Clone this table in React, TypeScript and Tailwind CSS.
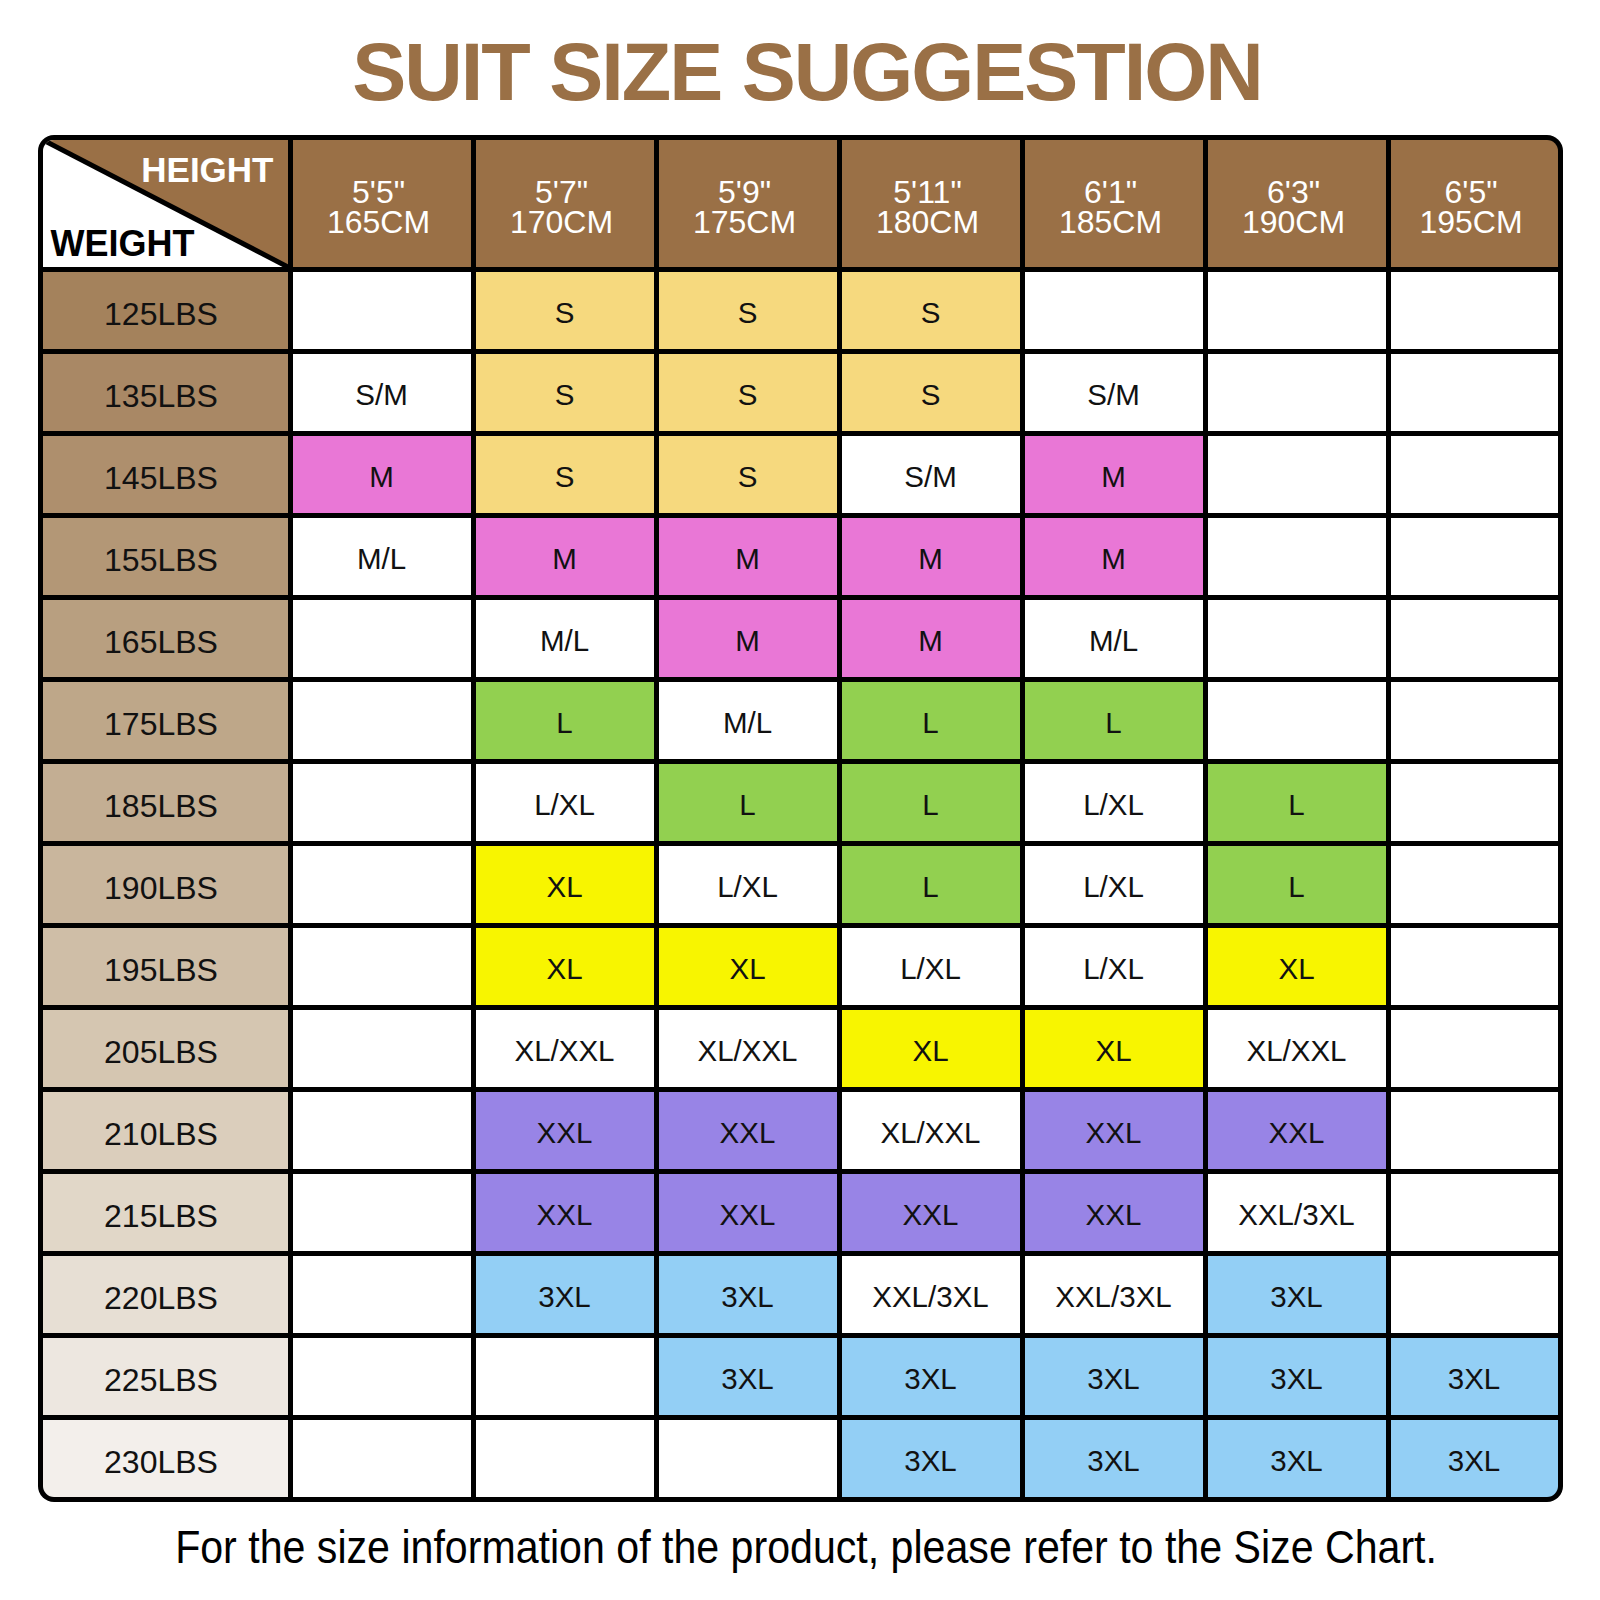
import React from "react";

const heights = [
  ["5'5\"", "165CM"],
  ["5'7\"", "170CM"],
  ["5'9\"", "175CM"],
  ["5'11\"", "180CM"],
  ["6'1\"", "185CM"],
  ["6'3\"", "190CM"],
  ["6'5\"", "195CM"],
];

const rows: { label: string; bg: string; cells: string[] }[] = [
  { label: "125LBS", bg: "bg-[#a4825c]", cells: ["", "S", "S", "S", "", "", ""] },
  { label: "135LBS", bg: "bg-[#a98865]", cells: ["S/M", "S", "S", "S", "S/M", "", ""] },
  { label: "145LBS", bg: "bg-[#ae8f6d]", cells: ["M", "S", "S", "S/M", "M", "", ""] },
  { label: "155LBS", bg: "bg-[#b39776]", cells: ["M/L", "M", "M", "M", "M", "", ""] },
  { label: "165LBS", bg: "bg-[#b89f80]", cells: ["", "M/L", "M", "M", "M/L", "", ""] },
  { label: "175LBS", bg: "bg-[#bea789]", cells: ["", "L", "M/L", "L", "L", "", ""] },
  { label: "185LBS", bg: "bg-[#c3ae93]", cells: ["", "L/XL", "L", "L", "L/XL", "L", ""] },
  { label: "190LBS", bg: "bg-[#c9b69d]", cells: ["", "XL", "L/XL", "L", "L/XL", "L", ""] },
  { label: "195LBS", bg: "bg-[#cfbea7]", cells: ["", "XL", "XL", "L/XL", "L/XL", "XL", ""] },
  { label: "205LBS", bg: "bg-[#d5c6b1]", cells: ["", "XL/XXL", "XL/XXL", "XL", "XL", "XL/XXL", ""] },
  { label: "210LBS", bg: "bg-[#dbcebc]", cells: ["", "XXL", "XXL", "XL/XXL", "XXL", "XXL", ""] },
  { label: "215LBS", bg: "bg-[#e1d7c8]", cells: ["", "XXL", "XXL", "XXL", "XXL", "XXL/3XL", ""] },
  { label: "220LBS", bg: "bg-[#e7dfd4]", cells: ["", "3XL", "3XL", "XXL/3XL", "XXL/3XL", "3XL", ""] },
  { label: "225LBS", bg: "bg-[#ede7e0]", cells: ["", "", "3XL", "3XL", "3XL", "3XL", "3XL"] },
  { label: "230LBS", bg: "bg-[#f3efeb]", cells: ["", "", "", "3XL", "3XL", "3XL", "3XL"] },
];

const colorFor = (v: string) => {
  switch (v) {
    case "S":
      return "bg-[#f6d97e]";
    case "M":
      return "bg-[#e977d6]";
    case "L":
      return "bg-[#92d050]";
    case "XL":
      return "bg-[#f8f500]";
    case "XXL":
      return "bg-[#9884e6]";
    case "3XL":
      return "bg-[#93cff5]";
    default:
      return "bg-white";
  }
};

export default function App() {
  return (
    <div className="w-[1600px] h-[1600px] bg-white pt-[32px] font-['Liberation_Sans',Arial,sans-serif] text-[#111]">
      <h1 className="text-center text-[81px] leading-[81px] font-bold tracking-[-2px] text-[#9a7046] pl-[14px]">
        SUIT SIZE SUGGESTION
      </h1>
      <div className="mt-[22px] mx-auto w-[1525px] rounded-[16px] bg-black p-[5px] grid grid-cols-[245px_repeat(6,178px)_167px] grid-rows-[127px_repeat(15,77px)] gap-[5px]">
        <div className="relative bg-white rounded-tl-[11px] overflow-hidden">
          <svg className="absolute inset-0 w-full h-full" viewBox="0 0 245 127" preserveAspectRatio="none">
            <polygon points="0,0 245,0 245,127" fill="#9a7046" />
            <line x1="0" y1="0" x2="245" y2="127" stroke="#000" strokeWidth="5" />
          </svg>
          <span className="absolute top-[12px] right-[14px] text-[35px] leading-[35px] font-bold text-white">
            HEIGHT
          </span>
          <span className="absolute top-[86px] left-[8px] text-[36px] leading-[36px] font-bold text-black">
            WEIGHT
          </span>
        </div>
        {heights.map((h, i) => (
          <div
            key={h[1]}
            className={`bg-[#9a7046] flex flex-col items-center justify-center pt-[6px] pr-[6px] text-white text-[32px] ${
              i === heights.length - 1 ? "rounded-tr-[11px]" : ""
            }`}
          >
            <div className="h-[30px] leading-[30px] overflow-visible">{h[0]}</div>
            <div className="h-[30px] leading-[30px] overflow-visible">{h[1]}</div>
          </div>
        ))}
        {rows.map((r, ri) => (
          <React.Fragment key={r.label}>
            <div
              className={`${r.bg} flex items-center justify-center pt-[6px] pr-[8px] text-[32px] leading-none ${
                ri === rows.length - 1 ? "rounded-bl-[11px]" : ""
              }`}
            >
              {r.label}
            </div>
            {r.cells.map((c, ci) => (
              <div
                key={ci}
                className={`${colorFor(c)} flex items-center justify-center pt-[5px] text-[29.5px] leading-none ${
                  ri === rows.length - 1 && ci === r.cells.length - 1 ? "rounded-br-[11px]" : ""
                }`}
              >
                {c}
              </div>
            ))}
          </React.Fragment>
        ))}
      </div>
      <p className="mt-[21px] text-center pl-[12px]">
        <span className="inline-block text-[47px] leading-[47px] scale-x-[0.875] text-black">
          For the size information of the product, please refer to the Size Chart.
        </span>
      </p>
    </div>
  );
}
